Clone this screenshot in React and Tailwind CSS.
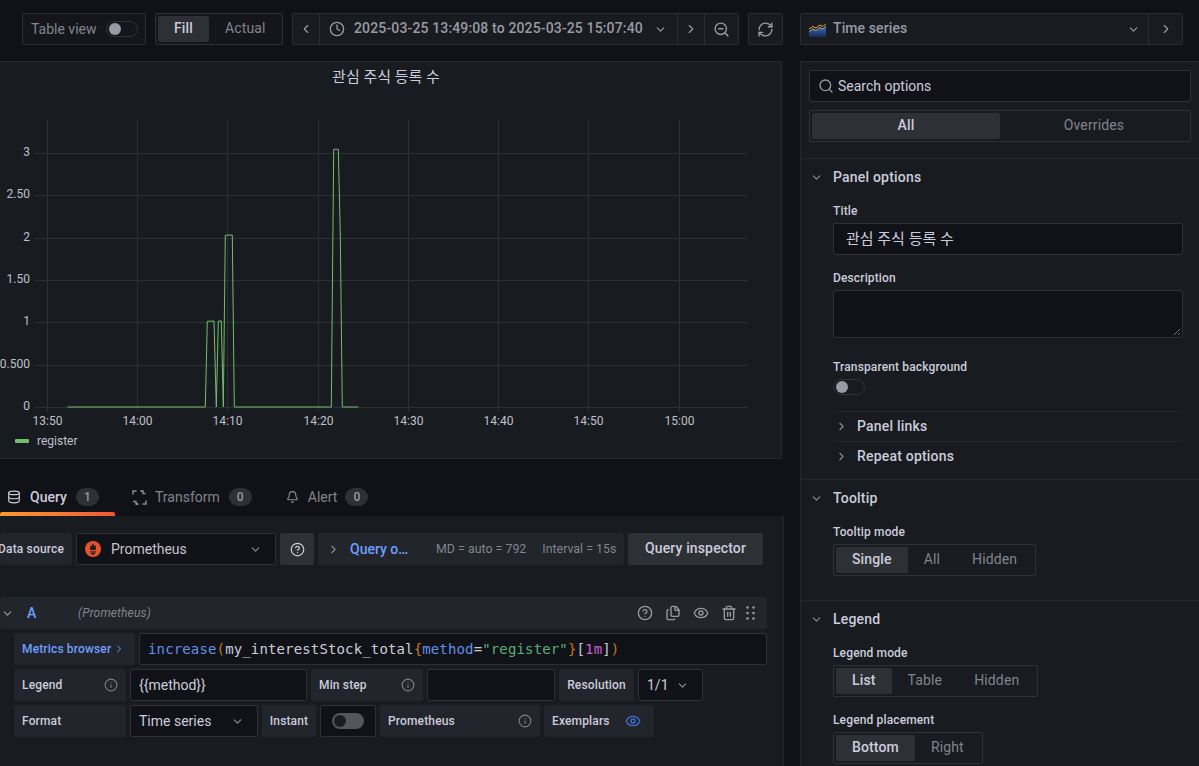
import React from 'react';
import { ChevronLeft, ChevronRight, ChevronDown, Clock, ZoomOut, RefreshCw, Search, Database, Bell, CircleHelp, Files, Eye, Trash2, Info } from 'lucide-react';

const Label = ({ children, className = '', color = 'text-[#ccccdc]' }) => (
    <div className={`flex items-center rounded-[2px] bg-[#22252b] text-[12px] font-medium tracking-[0.15px] h-8 ${color} ${className}`}>{children}</div>
);

const InfoLabel = ({ children, className = '' }) => (
    <Label className={`justify-between pl-2 pr-2 ${className}`}>
        {children}
        <Info className="w-[14px] h-[14px] text-[#7c7d86]" />
    </Label>
);

const Box = ({ children, className = '' }) => (
    <div className={`flex items-center rounded-[2px] border border-[#2f3136] bg-[#111217] text-[14px] text-[#ccccdc] h-8 ${className}`}>{children}</div>
);

const Radio = ({ items, active, className = '', stretch }) => (
    <div className={`flex h-8 rounded-[2px] border border-[#2f3136] p-[2px] ${className}`}>
        {items.map((item) => (
            <div
                key={item}
                className={`flex items-center justify-center rounded-[2px] px-4 pb-[2px] text-[14px] tracking-[0.14px] ${stretch ? 'flex-1' : ''} ${item === active ? 'bg-[#2d3035] font-medium text-[#ccccdc]' : 'text-[#83848e]'}`}
            >
                {item}
            </div>
        ))}
    </div>
);

const Field = ({ label, children, className = '' }) => (
    <div className={className}>
        <div className="h-5 text-[12px] leading-[17px] font-medium tracking-[0.14px] text-[#ccccdc]">{label}</div>
        {children}
    </div>
);

const SectionHead = ({ title }) => (
    <div className="flex h-9 items-center">
        <ChevronDown className="ml-[9px] w-[13px] h-[13px] text-[#8e8e98]" />
        <span className="ml-[10px] text-[14px] font-medium tracking-[0.2px] text-[#ccccdc]">{title}</span>
    </div>
);

const SubRow = ({ title, className = '' }) => (
    <div className={`flex items-center ${className}`}>
        <ChevronRight className="ml-[2px] w-[13px] h-[13px] text-[#8e8e98]" />
        <span className="ml-[9px] text-[14px] font-medium tracking-[0.2px] text-[#ccccdc]">{title}</span>
    </div>
);

const Badge = ({ n }) => (
    <span className="flex h-[18px] w-[23px] items-center justify-center rounded-full bg-[#2d3035] text-[12px] font-medium text-[#9a9aa5]">{n}</span>
);

const TransformIcon = () => (
    <svg width="15" height="15" viewBox="0 0 15 15" fill="none" stroke="#8e8e98" strokeWidth="1.4">
        <path d="M1 4.500V1H4.500M9 1.200l2-.2v2.500h2.500M14 10.500V14H10.500M6 13.800l-2 .2v-2.500H1" />
        <path d="M8.500 .8l2.500 .2M6.500 14.200l-2.500 -.2" />
    </svg>
);

const TimeSeriesIcon = () => (
    <svg width="17" height="15" viewBox="0 0 17 15">
        <defs>
            <linearGradient id="tsFill" x1="0" y1="0" x2="0" y2="1">
                <stop offset="0" stopColor="#3d71d9" />
                <stop offset="1" stopColor="#1a2a4e" />
            </linearGradient>
        </defs>
        <path d="M0 9l4-2.500 3 1.500 4-3 3 1.500 3-3V15H0z" fill="url(#tsFill)" />
        <path d="M0 7l4-2.500 3 1.500 4-3 3 1.500 3-3" fill="none" stroke="#f2a33a" strokeWidth="1" />
        <path d="M0 9.500l4-2.500 3 1.500 4-3 3 1.500 3-3" fill="none" stroke="#e8c43c" strokeWidth="0.7" />
    </svg>
);

const PrometheusIcon = () => (
    <svg width="16" height="16" viewBox="0 0 16 16">
        <circle cx="8" cy="8" r="8" fill="#e6522c" />
        <path d="M8 2.200c.5 1.500 1.300 1.700 1.200 3 .7-.3.9-1 .9-1.300 1 1.300 1.200 3.300 .4 5.100H5.500C4.700 7.200 5 5.600 5.800 4.500c0 .6 .3 1 .7 1.200C6.300 4.400 7.500 3.600 8 2.200z" fill="#1c1d20" />
        <rect x="5" y="10.400" width="6" height="1.100" fill="#1c1d20" />
        <path d="M5.800 12.100h4.400c-.3 1-1.200 1.700-2.200 1.700s-1.900-.7-2.200-1.700z" fill="#1c1d20" />
    </svg>
);

const GripDots = () => (
    <svg width="9" height="14" viewBox="0 0 9 14" fill="#9a9aa5">
        <circle cx="1.500" cy="1.500" r="1.300" /><circle cx="7.500" cy="1.500" r="1.300" />
        <circle cx="1.500" cy="7" r="1.300" /><circle cx="7.500" cy="7" r="1.300" />
        <circle cx="1.500" cy="12.500" r="1.300" /><circle cx="7.500" cy="12.500" r="1.300" />
    </svg>
);

const gridX = [47, 137, 227, 318, 408, 498, 588, 679];
const timeLabels = ['13:50', '14:00', '14:10', '14:20', '14:30', '14:40', '14:50', '15:00'];
const gridY = [
    [153, '3'],
    [195, '2.50'],
    [238, '2'],
    [280, '1.50'],
    [322, '1'],
    [365, '0.500'],
    [407, '0'],
];
const series = '67.500,407 205.300,407 207.300,321.300 214,321 216.300,407 218.300,321 221.300,321 223.300,407 225.300,235.300 232.300,235 234.300,407 331.300,407 333.700,149.300 338.300,149.300 340.300,235.300 342.300,407 358.300,407';

const Chart = () => (
    <svg width="781" height="365" viewBox="0 92 781 365" className="block">
        {gridX.map((x) => (
            <line key={x} x1={x + 0.5} x2={x + 0.5} y1="120" y2="412" stroke="#2c2f34" />
        ))}
        {gridY.map(([y]) => (
            <line key={y} x1="35" x2="748" y1={y + 0.5} y2={y + 0.5} stroke="#2c2f34" />
        ))}
        {gridY.map(([y, t]) => (
            <text key={t} x="30" y={y + 2.500} textAnchor="end" fontSize="12" fill="#c0c0cc">{t}</text>
        ))}
        {timeLabels.map((t, i) => (
            <text key={t} x={gridX[i] + 0.5} y="425" textAnchor="middle" fontSize="12" fill="#c0c0cc">{t}</text>
        ))}
        <polyline points={series} fill="none" stroke="#73bf69" strokeWidth="1" />
        <rect x="15" y="439" width="14" height="4" rx="1" fill="#73bf69" />
        <text x="37" y="445" fontSize="12" fill="#c0c0cc">register</text>
    </svg>
);

export default function App() {
    return (
        <div className="flex h-[766px] w-[1199px] overflow-hidden bg-[#111217] font-[Roboto,'Noto_Sans_CJK_KR',sans-serif]">
            {/* left column */}
            <div className="w-[784px] shrink-0">
                <div className="flex h-[61px] items-start gap-[9px] pl-[22px] pt-[13px]">
                    <div className="flex h-8 w-[124px] items-center rounded-[2px] border border-[#2a2d32] bg-[#14161b] pl-2 text-[14px] text-[#83848e]">
                        Table view
                        <span className="relative ml-[9px] h-4 w-8 rounded-full border border-[#2f3136]">
                            <span className="absolute left-[2px] top-[1px] h-3 w-3 rounded-full bg-[#9a9aa5]" />
                        </span>
                    </div>
                    <Radio items={['Fill', 'Actual']} active="Fill" className="w-[128px] bg-[#14161b]" />
                    <div className="flex h-8 w-[447px] items-center rounded-[2px] border border-[#2a2d32] bg-[#181b1f] text-[#9a9aa5]">
                        <div className="flex h-full w-[27px] items-center justify-center border-r border-[#2a2d32]"><ChevronLeft className="w-[14px] h-[14px]" /></div>
                        <div className="flex h-full w-[358px] items-center border-r border-[#2a2d32] pl-[9px] text-[14px] font-medium">
                            <Clock className="w-4 h-4" />
                            <span className="ml-[9px] pb-px tracking-[0.14px]">2025-03-25 13:49:08 to 2025-03-25 15:07:40</span>
                            <ChevronDown className="ml-[11px] w-[13px] h-[13px]" />
                        </div>
                        <div className="flex h-full w-[27px] items-center justify-center border-r border-[#2a2d32]"><ChevronRight className="w-[14px] h-[14px]" /></div>
                        <div className="flex flex-1 items-center justify-center"><ZoomOut className="w-[17px] h-[17px]" /></div>
                    </div>
                    <div className="flex h-8 w-[35px] items-center justify-center rounded-[2px] border border-[#2a2d32] bg-[#181b1f] text-[#9a9aa5]">
                        <RefreshCw className="w-[17px] h-[17px]" />
                    </div>
                </div>

                {/* panel */}
                <div className="h-[398px] w-[782px] rounded-r-[2px] border border-l-0 border-[#24272c] bg-[#181b1f]">
                    <div className="h-[30px] pr-[9px] pt-[4px] text-center text-[15px] leading-[22px] text-[#ccccdc]">관심 주식 등록 수</div>
                    <Chart />
                </div>

                {/* query tabs */}
                <div className="mt-[21px] flex h-9">
                    <div className="relative flex w-[115px] items-center pl-[7px] pb-[2px]">
                        <Database className="w-[14px] h-[14px] text-[#ccccdc]" />
                        <span className="ml-[9px] text-[14px] font-medium text-[#ccccdc]">Query</span>
                        <span className="ml-[9px]"><Badge n="1" /></span>
                        <span className="absolute bottom-0 left-0 h-1 w-[115px] rounded-t-[2px] bg-gradient-to-r from-[#f99a2e] to-[#f2553a]" />
                    </div>
                    <div className="ml-[17px] flex items-center pb-[2px]">
                        <TransformIcon />
                        <span className="ml-2 text-[14px] text-[#83848e]">Transform</span>
                        <span className="ml-[9px]"><Badge n="0" /></span>
                    </div>
                    <div className="ml-[34px] flex items-center pb-[2px]">
                        <Bell className="w-[13px] h-[14px] text-[#8e8e98]" />
                        <span className="ml-[9px] text-[14px] text-[#83848e]">Alert</span>
                        <span className="ml-[8px]"><Badge n="0" /></span>
                    </div>
                </div>

                {/* query editor */}
                <div className="h-[250px] border-r border-[#24272c] bg-[#181b1f] pr-4 pt-[17px]">
                    <div className="flex h-8 gap-1">
                        <Label className="w-[72px] justify-end pr-2 whitespace-nowrap">Data source</Label>
                        <Box className="w-[200px] pl-2 pr-[13px]">
                            <PrometheusIcon />
                            <span className="ml-[10px] text-[#c4c4d0]">Prometheus</span>
                            <ChevronDown className="ml-auto w-[13px] h-[13px] text-[#8e8e98]" />
                        </Box>
                        <div className="flex w-[34px] items-center justify-center rounded-[2px] bg-[#2d3035] text-[#ccccdc]">
                            <CircleHelp className="w-[15px] h-[15px]" />
                        </div>
                        <div className="flex w-[306px] items-center rounded-[2px] bg-[#22252b] text-[12.4px] text-[#83848e]">
                            <ChevronRight className="ml-[9px] w-[13px] h-[13px] text-[#8e8e98]" />
                            <span className="ml-[10px] w-[61px] truncate text-[14px] font-medium text-[#6e9fff]">Query options</span>
                            <span className="ml-[25px]">MD = auto = 792</span>
                            <span className="ml-4">Interval = 15s</span>
                        </div>
                        <div className="flex w-[135px] items-center justify-center rounded-[2px] bg-[#2d3035] pb-px text-[14px] font-medium tracking-[0.14px] text-[#ccccdc]">Query inspector</div>
                    </div>

                    <div className="mt-8 flex h-8 items-center rounded-[2px] bg-[#22252b] text-[#9a9aa5]">
                        <ChevronDown className="ml-[1px] w-[13px] h-[13px]" />
                        <span className="ml-[13px] w-[51px] text-[14px] font-medium text-[#6e9fff]">A</span>
                        <span className="text-[12px] italic tracking-[0.15px] text-[#83848e]">(Prometheus)</span>
                        <div className="ml-auto flex items-center pr-[12px]">
                            <CircleHelp className="w-4 h-4" />
                            <Files className="ml-3 w-4 h-4" />
                            <Eye className="ml-3 w-4 h-4" />
                            <Trash2 className="ml-3 w-4 h-4" />
                            <span className="ml-[9px] flex"><GripDots /></span>
                        </div>
                    </div>

                    <div className="ml-[14px] mt-1 flex flex-col gap-1">
                        <div className="flex gap-1">
                            <Label color="text-[#6e9fff]" className="w-[121px] pl-2">
                                Metrics browser
                                <ChevronRight className="ml-[2px] w-3 h-3" />
                            </Label>
                            <Box className="flex-1 pl-2 font-['DejaVu_Sans_Mono',monospace] text-[14px] tracking-[0.14px]">
                                <span className="text-[#6090e8]">increase</span>
                                <span className="text-[#c7761c]">(</span>
                                <span>my_interestStock_total</span>
                                <span className="text-[#c7761c]">{'{'}</span>
                                <span className="text-[#6090e8]">method</span>
                                <span>=</span>
                                <span className="text-[#57b07a]">"register"</span>
                                <span className="text-[#c7761c]">{'}'}</span>
                                <span>[</span>
                                <span className="text-[#c95fd0]">1m</span>
                                <span>]</span>
                                <span className="text-[#c7761c]">)</span>
                            </Box>
                        </div>
                        <div className="flex gap-1">
                            <InfoLabel className="w-[112px]">Legend</InfoLabel>
                            <Box className="w-[177px] pl-2">{'{{method}}'}</Box>
                            <InfoLabel className="w-[112px]">Min step</InfoLabel>
                            <Box className="w-[128px]" />
                            <Label className="w-[75px] justify-center">Resolution</Label>
                            <Box className="w-[65px] pl-2">
                                1/1
                                <ChevronDown className="ml-auto mr-[13px] w-[13px] h-[13px] text-[#8e8e98]" />
                            </Box>
                        </div>
                        <div className="flex gap-1">
                            <Label className="w-[112px] pl-2">Format</Label>
                            <Box className="w-[128px] pl-2">
                                Time series
                                <ChevronDown className="ml-auto mr-[13px] w-[13px] h-[13px] text-[#8e8e98]" />
                            </Box>
                            <Label className="w-[54px] justify-center">Instant</Label>
                            <Box className="w-[56px] justify-center">
                                <span className="relative h-4 w-8 rounded-full bg-[#55565a]">
                                    <span className="absolute left-[2px] top-[2px] h-3 w-3 rounded-full bg-[#1c1d21]" />
                                </span>
                            </Box>
                            <InfoLabel className="w-[160px]">Prometheus</InfoLabel>
                            <Label className="w-[110px] justify-between pl-2 pr-[13px]">
                                Exemplars
                                <Eye className="w-4 h-4 text-[#3d71d9]" />
                            </Label>
                        </div>
                    </div>
                </div>
            </div>

            {/* right column */}
            <div className="ml-4 flex-1">
                <div className="flex h-[61px] items-start pt-[13px]">
                    <div className="flex h-8 w-[383px] items-center rounded-[2px] border border-[#2a2d32] bg-[#181b1f] text-[#9a9aa5]">
                        <div className="flex h-full flex-1 items-center border-r border-[#2a2d32] pl-2 pr-2">
                            <TimeSeriesIcon />
                            <span className="ml-[7px] pb-px text-[14px] font-medium tracking-[0.1px]">Time series</span>
                            <ChevronDown className="ml-auto w-[13px] h-[13px]" />
                        </div>
                        <div className="flex w-[33px] items-center justify-center"><ChevronRight className="w-[14px] h-[14px]" /></div>
                    </div>
                </div>
                <div className="h-[705px] border-l border-t border-[#24272c] bg-[#181b1f]">
                    <div className="border-b border-[#24272c] pb-4 pl-2 pt-2">
                        <Box className="w-[382px] pl-2 text-[#83848e]">
                            <Search className="w-4 h-4 text-[#9a9aa5]" />
                            <span className="ml-1">Search options</span>
                        </Box>
                        <Radio items={['All', 'Overrides']} active="All" stretch className="mt-2 w-[382px]" />
                    </div>

                    <div className="border-b border-[#24272c] pb-2">
                        <SectionHead title="Panel options" />
                        <div className="ml-8 mr-4 mt-2">
                            <Field label="Title">
                                <Box className="pl-3 pt-px text-[15px]">관심 주식 등록 수</Box>
                            </Field>
                            <Field label="Description" className="mt-[15px]">
                                <Box className="relative h-12">
                                    <svg className="absolute bottom-[1px] right-[1px]" width="8" height="8" viewBox="0 0 8 8" stroke="#8e8e98" strokeWidth="0.8">
                                        <path d="M1 7l6-6M5 7l2-2" />
                                    </svg>
                                </Box>
                            </Field>
                            <Field label="Transparent background" className="mt-[21px]">
                                <span className="relative block h-4 w-8 rounded-full border border-[#2f3136]">
                                    <span className="absolute left-[2px] top-[1px] h-3 w-3 rounded-full bg-[#9a9aa5]" />
                                </span>
                            </Field>
                            <div className="mt-4 border-t border-[#24272c]">
                                <SubRow title="Panel links" className="h-[30px] border-b border-[#24272c]" />
                                <SubRow title="Repeat options" className="h-[29px]" />
                            </div>
                        </div>
                    </div>

                    <div className="border-b border-[#24272c] pb-6">
                        <SectionHead title="Tooltip" />
                        <div className="ml-8 mt-2">
                            <Field label="Tooltip mode">
                                <Radio items={['Single', 'All', 'Hidden']} active="Single" className="w-fit" />
                            </Field>
                        </div>
                    </div>

                    <div>
                        <SectionHead title="Legend" />
                        <div className="ml-8 mt-2">
                            <Field label="Legend mode">
                                <Radio items={['List', 'Table', 'Hidden']} active="List" className="w-fit" />
                            </Field>
                            <Field label="Legend placement" className="mt-[15px]">
                                <Radio items={['Bottom', 'Right']} active="Bottom" className="w-fit" />
                            </Field>
                        </div>
                    </div>
                </div>
            </div>
        </div>
    );
}
